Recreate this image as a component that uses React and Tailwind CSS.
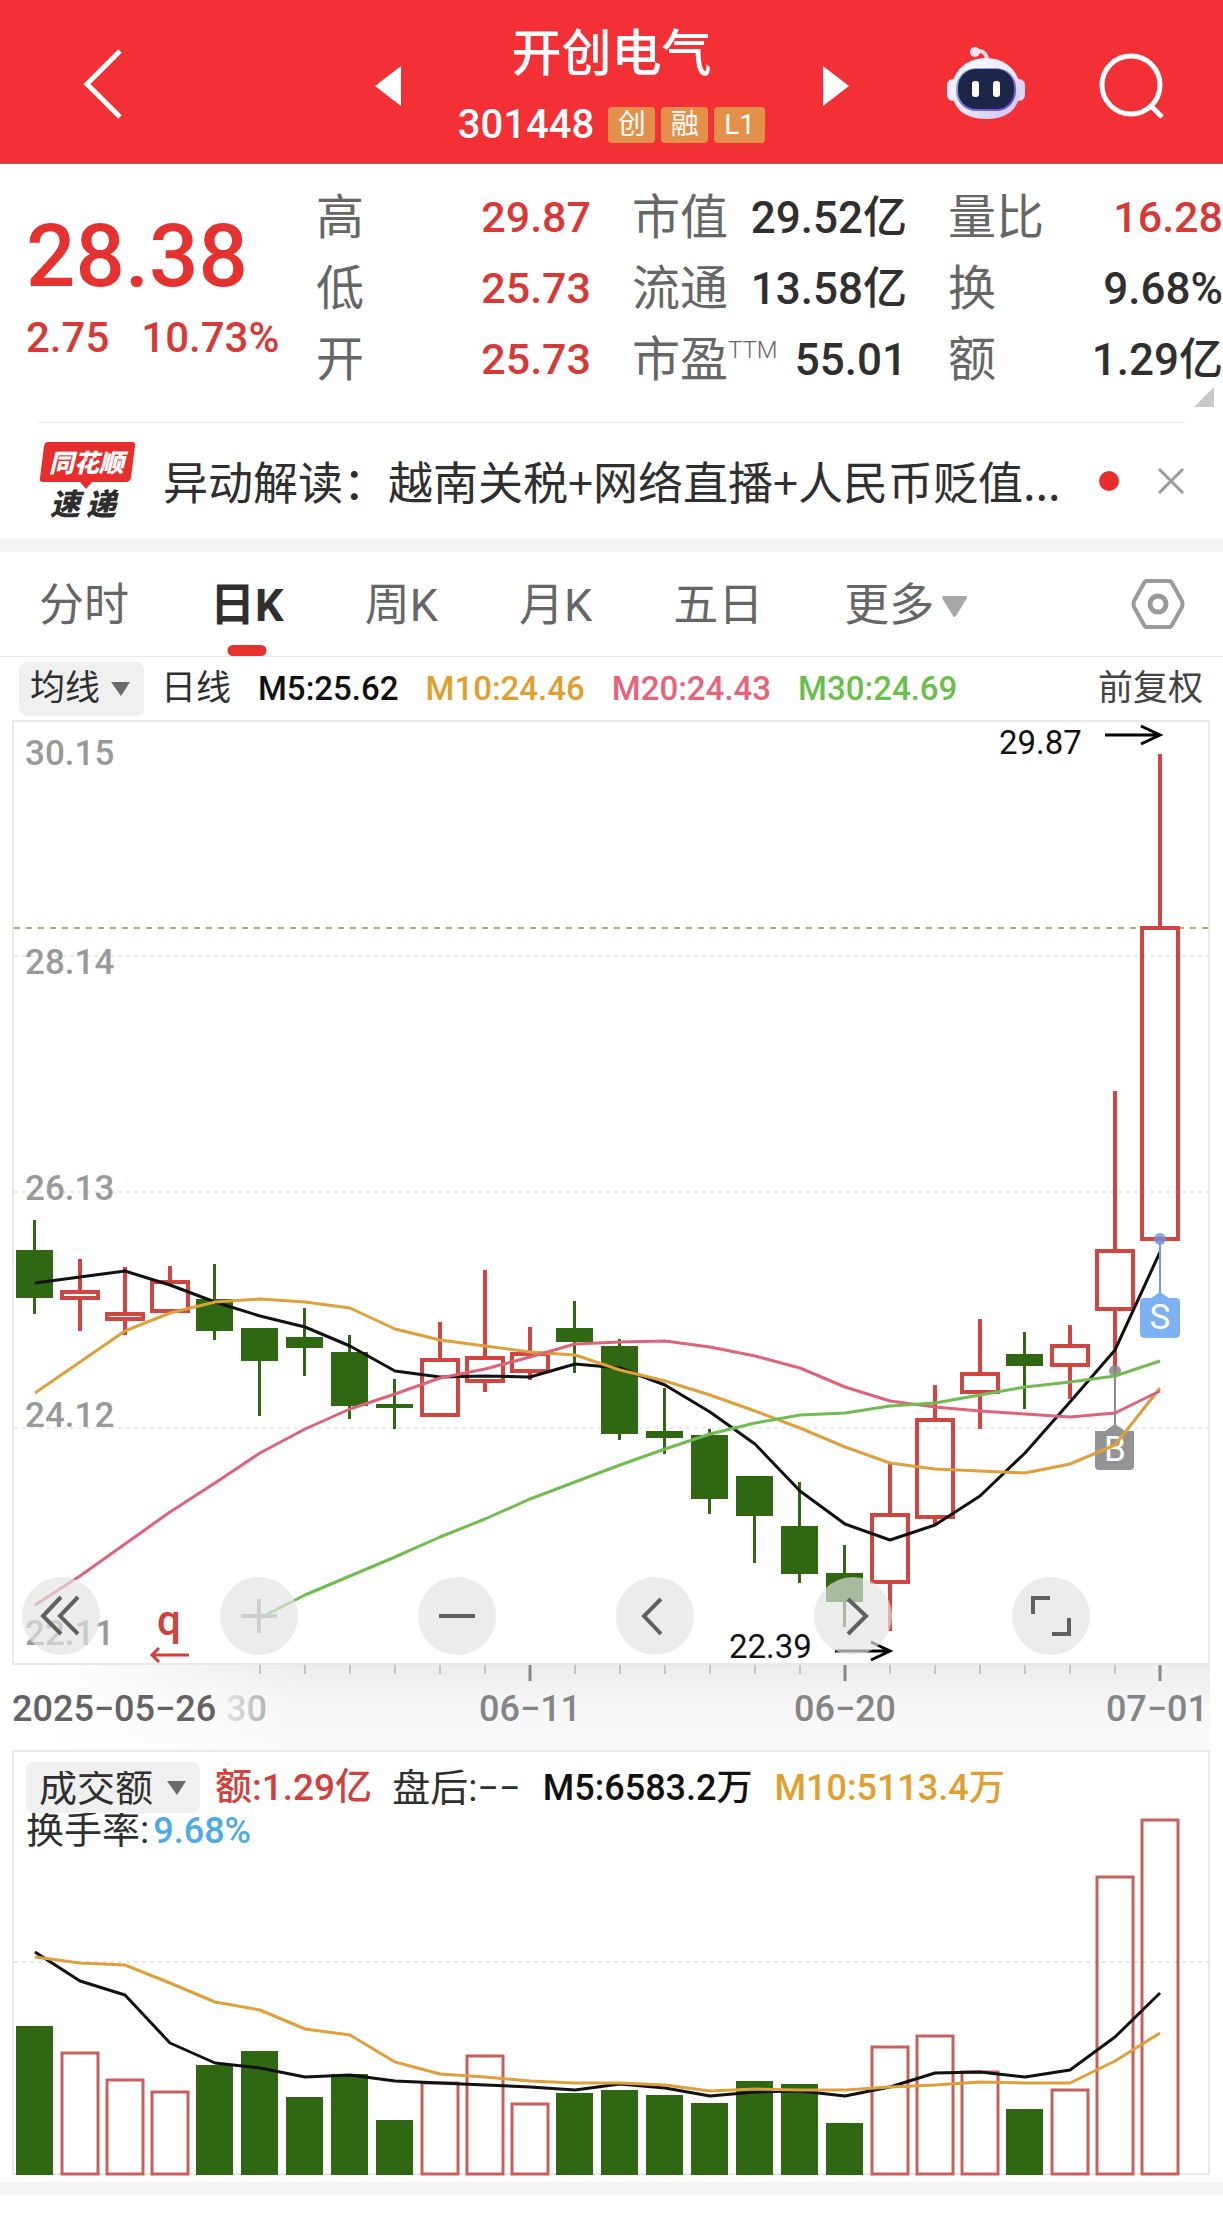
import React from "react";

const GREEN = "#306712";
const RED = "#d0453f";

// [kind, high, body top, body bottom, low]
const CANDLES = [
  ["d", 1220, 1250, 1298, 1314],
  ["u", 1259, 1290, 1300, 1331],
  ["u", 1267, 1312, 1321, 1335],
  ["u", 1266, 1280, 1313, 1313],
  ["d", 1264, 1299, 1331, 1340],
  ["d", 1328, 1328, 1361, 1416],
  ["d", 1308, 1337, 1348, 1376],
  ["d", 1335, 1352, 1406, 1419],
  ["d", 1379, 1404, 1408, 1429],
  ["u", 1322, 1358, 1417, 1417],
  ["u", 1270, 1356, 1383, 1392],
  ["u", 1327, 1352, 1373, 1380],
  ["d", 1301, 1328, 1342, 1373],
  ["d", 1339, 1346, 1434, 1440],
  ["d", 1388, 1431, 1438, 1454],
  ["d", 1429, 1435, 1499, 1514],
  ["d", 1476, 1476, 1516, 1563],
  ["d", 1482, 1526, 1574, 1583],
  ["d", 1545, 1573, 1602, 1627],
  ["u", 1462, 1513, 1584, 1631],
  ["u", 1385, 1418, 1519, 1524],
  ["u", 1319, 1372, 1394, 1429],
  ["d", 1332, 1354, 1366, 1409],
  ["u", 1325, 1344, 1367, 1399],
  ["u", 1091, 1249, 1311, 1372],
  ["u", 754, 926, 1241, 1241],
];

const M5 = [1283, 1277, 1271, 1285, 1302, 1316, 1327, 1346, 1371, 1377, 1376, 1377, 1364, 1368, 1385, 1412, 1444, 1491, 1524, 1540, 1525, 1496, 1453, 1402, 1350, 1252];
const M10 = [1393, 1362, 1331, 1313, 1302, 1299, 1302, 1308, 1329, 1340, 1346, 1352, 1355, 1370, 1381, 1395, 1411, 1428, 1447, 1463, 1469, 1471, 1473, 1464, 1445, 1388];
const M20 = [1605, 1576, 1544, 1512, 1483, 1453, 1429, 1409, 1394, 1378, 1369, 1357, 1344, 1342, 1341, 1347, 1356, 1368, 1387, 1401, 1407, 1411, 1414, 1417, 1413, 1391];
const M30 = [1618, 1595, 1576, 1557, 1537, 1519, 1499, 1482, 1465, 1449, 1434, 1423, 1415, 1413, 1406, 1403, 1395, 1387, 1382, 1376, 1361];

const VOLUME_TOP = [2026, 2052, 2079, 2091, 2065, 2051, 2097, 2074, 2120, 2082, 2055, 2103, 2093, 2090, 2095, 2103, 2081, 2084, 2123, 2046, 2035, 2071, 2109, 2089, 1876, 1819];
const V5 = [1952, 1981, 1995, 2043, 2063, 2068, 2077, 2075, 2081, 2083, 2085, 2087, 2090, 2084, 2088, 2096, 2092, 2091, 2096, 2087, 2073, 2072, 2077, 2070, 2037, 1993];
const V10 = [1957, 1963, 1965, 1983, 2002, 2010, 2029, 2035, 2062, 2074, 2077, 2081, 2083, 2083, 2085, 2091, 2089, 2090, 2090, 2087, 2085, 2082, 2083, 2083, 2061, 2033];

const xAt = (i) => 35 + 45 * i;

function Line({ data, start = 0, color, width = 3 }) {
  const points = data.map((y, i) => `${xAt(i + start)},${y}`).join(" ");
  return <polyline points={points} fill="none" stroke={color} strokeWidth={width} strokeLinejoin="round" />;
}

function Candle({ item, i }) {
  const [kind, high, top, bottom, low] = item;
  const x = xAt(i);
  if (kind === "d") {
    return (
      <g fill={GREEN}>
        <rect x={x - 2} y={high} width="3" height={low - high} />
        <rect x={x - 19} y={top} width="37" height={bottom - top} />
      </g>
    );
  }
  return (
    <g stroke={RED} fill="none">
      <path d={`M${x} ${high}V${top}M${x} ${bottom}V${low}`} strokeWidth="4" />
      <rect x={x - 18} y={top + 2} width="36" height={bottom - top - 4} strokeWidth="4" />
    </g>
  );
}

function Header() {
  return (
    <header className="grid grid-cols-[1fr_auto_1fr] items-center border-b border-[#b8605c] bg-[#f23036] pt-[24px] pb-[20px] text-white">
      <div className="pl-[80px]">
        <button type="button" aria-label="返回" className="block">
          <svg width="46" height="72" viewBox="0 0 46 72" fill="none" stroke="#fff" strokeWidth="5">
            <path d="M40 3L7 36L40 69" />
          </svg>
        </button>
      </div>
      <div className="flex items-center">
        <button type="button" aria-label="上一只" className="mt-1">
          <svg width="26" height="40" viewBox="0 0 26 40" fill="#fff"><path d="M26 0V40L0 20Z" /></svg>
        </button>
        <div className="flex w-[422px] flex-col items-center gap-[23px]">
          <h1 className="text-[50px] leading-[60px] font-medium">开创电气</h1>
          <div className="flex h-9 items-center gap-[6px]">
            <span className="mr-2 text-[40px] leading-9 font-medium">301448</span>
            <span className="w-[47px] rounded bg-[#e3914a] text-center text-[28px] leading-9">创</span>
            <span className="w-[47px] rounded bg-[#e3914a] text-center text-[28px] leading-9">融</span>
            <span className="w-[51px] rounded bg-[#e3914a] text-center text-[28px] leading-9">L1</span>
          </div>
        </div>
        <button type="button" aria-label="下一只" className="mt-1">
          <svg width="26" height="40" viewBox="0 0 26 40" fill="#fff"><path d="M0 0V40L26 20Z" /></svg>
        </button>
      </div>
      <div className="flex items-center justify-end gap-[73px] pr-[58px]">
        <button type="button" aria-label="智能助手">
          <svg width="80" height="76" viewBox="0 0 80 76">
            <defs>
              <linearGradient id="shell" x1="0" y1="0" x2="1" y2="1">
                <stop offset="0" stopColor="#ffffff" />
                <stop offset="0.55" stopColor="#ece6fb" />
                <stop offset="1" stopColor="#c3bdf3" />
              </linearGradient>
              <linearGradient id="rim" x1="0" y1="0" x2="1" y2="1">
                <stop offset="0" stopColor="#8fc4ee" />
                <stop offset="1" stopColor="#6a35d8" />
              </linearGradient>
            </defs>
            <path d="M28 5Q41 3 41 15" fill="none" stroke="#f6d9e6" strokeWidth="4" />
            <circle cx="29" cy="6" r="5" fill="#fbe3ec" />
            <rect x="1" y="33" width="12" height="22" rx="6" fill="#f1eefc" />
            <rect x="67" y="33" width="12" height="22" rx="6" fill="#dcd6f7" />
            <path d="M40 12C60 12 74 26 74 43C74 62 62 73 40 73C18 73 6 62 6 43C6 26 20 12 40 12Z" fill="url(#shell)" />
            <rect x="10" y="22" width="60" height="43" rx="20" fill="url(#rim)" />
            <rect x="12" y="23" width="56" height="40" rx="18" fill="#1d2549" />
            <rect x="26" y="35" width="7" height="16" rx="3" fill="#fff" />
            <rect x="47" y="35" width="7" height="16" rx="3" fill="#fff" />
          </svg>
        </button>
        <button type="button" aria-label="搜索" className="mt-1">
          <svg width="66" height="68" viewBox="0 0 66 68" fill="none" stroke="#fff" strokeWidth="5">
            <circle cx="32" cy="33" r="29" />
            <path d="M52 54L63 65" />
          </svg>
        </button>
      </div>
    </header>
  );
}

function Stat({ label, sup, value, up }) {
  return (
    <div className="flex h-[71px] items-center justify-between whitespace-nowrap">
      <dt className="flex text-[48px] leading-[56px] text-[#666]">
        {label}
        {sup && <sup className="top-0 text-[24px] leading-[36px] font-light">{sup}</sup>}
      </dt>
      <dd className={up ? "text-[43px] font-medium text-[#d63a38]" : "text-[44px] font-medium text-[#2f2f2f]"}>{value}</dd>
    </div>
  );
}

function Quote() {
  return (
    <section className="relative grid grid-cols-[249px_1fr_1fr_1fr] gap-x-[41px] pt-[18px] pb-[27px] pl-[26px]">
      <div className="flex flex-col gap-[9px] pt-[26px] whitespace-nowrap text-[#d63a38]">
        <strong className="text-[87px] leading-[96px] font-medium text-[#e33230]">28.38</strong>
        <p className="flex gap-[32px] text-[42px] leading-[50px] font-medium">
          <span>2.75</span>
          <span>10.73%</span>
        </p>
      </div>
      <dl>
        <Stat label="高" value="29.87" up />
        <Stat label="低" value="25.73" up />
        <Stat label="开" value="25.73" up />
      </dl>
      <dl>
        <Stat label="市值" value="29.52亿" />
        <Stat label="流通" value="13.58亿" />
        <Stat label="市盈" sup="TTM" value="55.01" />
      </dl>
      <dl>
        <Stat label="量比" value="16.28" up />
        <Stat label="换" value="9.68%" />
        <Stat label="额" value="1.29亿" />
      </dl>
      <svg className="absolute right-[9px] bottom-[15px]" width="20" height="20" viewBox="0 0 20 20" fill="#c8c8c8">
        <path d="M20 0V20H0Z" />
      </svg>
    </section>
  );
}

function News() {
  return (
    <section className="mx-[38px] flex h-[117px] items-center border-t border-[#eaeaea]">
      <svg width="98" height="88" viewBox="0 -4 98 88" className="shrink-0" role="img" aria-label="同花顺速递">
        <path d="M10 1H94Q98 1 97 5L93 37Q92 41 88 41H54L48 48L42 41H5Q1 41 2 37L6 5Q7 1 10 1Z" fill="#e62e2d" />
        <text x="11" y="31" fontSize="25" fontWeight="900" fontStyle="italic" fill="#fff">同花顺</text>
        <text x="12" y="74" fontSize="30" fontWeight="900" fontStyle="italic" fill="#2e2e2e">速</text>
        <text x="48" y="74" fontSize="30" fontWeight="900" fontStyle="italic" fill="#2e2e2e">递</text>
      </svg>
      <a href="#news" className="ml-[27px] flex-1 font-['Noto_Sans_CJK_SC',sans-serif] text-[45px] leading-[60px] whitespace-nowrap text-[#2f2f2f]">
        异动解读：越南关税+网络直播+人民币贬值...
      </a>
      <span className="mr-[38px] size-5 rounded-full bg-[#e62e2d]" />
      <button type="button" aria-label="关闭">
        <svg width="28" height="28" viewBox="0 0 28 28" stroke="#999" strokeWidth="3" className="block">
          <path d="M2 2L26 26M26 2L2 26" />
        </svg>
      </button>
    </section>
  );
}

function Tabs() {
  const tab = "pt-1 text-[45px] leading-[60px] text-[#666]";
  return (
    <nav className="flex h-[105px] items-center gap-[81px] border-b border-[#e8e8e8] pr-[38px] pl-[39px] whitespace-nowrap">
      <button type="button" className={tab}>分时</button>
      <button type="button" className="relative pt-1 text-[45px] leading-[60px] font-bold text-[#2f2f2f]">
        日K
        <span className="absolute -bottom-5 left-1/2 h-[11px] w-[39px] -translate-x-1/2 rounded-full bg-[#e33230]" />
      </button>
      <button type="button" className={tab}>周K</button>
      <button type="button" className={tab}>月K</button>
      <button type="button" className={tab}>五日</button>
      <button type="button" className="flex items-center gap-2 pt-1 text-[45px] leading-[60px] text-[#666]">
        更多
        <svg width="25" height="21" viewBox="0 0 25 21" fill="#a8a8a8"><path d="M1 0H24Q25 0 25 2L14 20Q12 22 11 20L0 2Q0 0 1 0Z" /></svg>
      </button>
      <button type="button" aria-label="设置" className="ml-auto">
        <svg width="54" height="52" viewBox="0 0 54 52" fill="none" stroke="#9a9a9a" className="block">
          <path d="M16 3H38Q40 3 41 5L51 23Q52 26 51 29L41 47Q40 49 38 49H16Q14 49 13 47L3 29Q2 26 3 23L13 5Q14 3 16 3Z" strokeWidth="4" />
          <circle cx="27" cy="26" r="8" strokeWidth="5" />
        </svg>
      </button>
    </nav>
  );
}

function Picker({ label, text, className }) {
  return (
    <label className="relative block shrink-0">
      <select aria-label={label} className={className}>
        <option>{text}</option>
      </select>
      <svg className="pointer-events-none absolute top-1/2 right-[14px] -translate-y-1/2" width="19" height="14" viewBox="0 0 19 14" fill="#6b6b6b">
        <path d="M0 0H19L10 14Z" />
      </svg>
    </label>
  );
}

function Averages() {
  return (
    <div className="flex h-[63px] items-center pr-[20px] pl-[19px] text-[33px] leading-[40px] font-medium whitespace-nowrap">
      <Picker
        label="主图指标"
        text="均线"
        className="block h-[54px] w-[125px] appearance-none rounded-lg bg-[#f0f0f0] pl-[11px] text-[35px] font-normal text-[#2f2f2f]"
      />
      <span className="ml-[17px] text-[35px] font-normal text-[#2f2f2f]">日线</span>
      <span className="ml-[27px] text-[#111]">M5:25.62</span>
      <span className="ml-[27px] text-[#e0a030]">M10:24.46</span>
      <span className="ml-[27px] text-[#e8627a]">M20:24.43</span>
      <span className="ml-[27px] text-[#6abf4b]">M30:24.69</span>
      <span className="ml-auto text-[35px] font-normal text-[#444]">前复权</span>
    </div>
  );
}

function RoundButton({ label, children }) {
  return (
    <button type="button" aria-label={label} className="size-[78px] rounded-full bg-[#e3e3e3]/68">
      <svg width="78" height="78" viewBox="0 0 78 78" fill="none" stroke="#606060" strokeWidth="4" className="block">
        {children}
      </svg>
    </button>
  );
}

function PriceChart() {
  const grid = [956, 1192, 1428];
  const major = [11, 18, 25];
  return (
    <section className="relative">
      <svg viewBox="0 720 1223 1030" className="block h-auto w-full" role="img" aria-label="日K线图">
        <defs>
          <linearGradient id="strip" x1="0" y1="0" x2="0" y2="1">
            <stop offset="0" stopColor="#ececec" />
            <stop offset="0.5" stopColor="#f7f7f7" />
            <stop offset="1" stopColor="#fafafa" />
          </linearGradient>
          <linearGradient id="fade" x1="0" y1="0" x2="1" y2="0">
            <stop offset="0" stopColor="#fff" />
            <stop offset="0.2" stopColor="#fff" stopOpacity="0.9" />
            <stop offset="1" stopColor="#fff" stopOpacity="0" />
          </linearGradient>
          <linearGradient id="thirty" x1="0" y1="0" x2="1" y2="0">
            <stop offset="0" stopColor="#e4e4e4" />
            <stop offset="1" stopColor="#b4b4b4" />
          </linearGradient>
        </defs>
        <rect x="13" y="1664" width="1197" height="88" fill="url(#strip)" />
        <rect x="12" y="1664" width="290" height="88" fill="url(#fade)" />
        <rect x="13" y="721" width="1196" height="943" fill="none" stroke="#e9e9e9" strokeWidth="2" />
        {grid.map((y) => (
          <path key={y} d={`M14 ${y}H1209`} stroke="#e6e6e6" strokeWidth="1.5" strokeDasharray="4 4" />
        ))}
        <path d="M14 928H1209" stroke="#c0a878" strokeWidth="2" strokeDasharray="6 6" />

        <g fontSize="35" fontWeight="500" fill="#999">
          <text x="25" y="765">30.15</text>
          <text x="25" y="974">28.14</text>
          <text x="25" y="1200">26.13</text>
          <text x="25" y="1427">24.12</text>
          <text x="25" y="1645">22.11</text>
        </g>

        {CANDLES.map((item, i) => <Candle key={i} item={item} i={i} />)}

        <g>
          <circle cx="1115" cy="1371" r="6" fill="#8a8a8a" fillOpacity="0.85" />
          <path d="M1115 1371V1426" stroke="#8a8a8a" strokeWidth="2" />
          <path d="M1115 1424L1125 1431H1134V1466Q1134 1470 1130 1470H1099Q1095 1470 1095 1466V1431H1105Z" fill="#939393" />
          <text x="1115" y="1461" fontSize="35" textAnchor="middle" fill="#fff">B</text>
        </g>

        <Line data={M5} color="#111" />
        <Line data={M10} color="#dca03c" />
        <Line data={M20} color="#dd6478" />
        <Line data={M30} start={5} color="#72ba54" />

        <g>
          <circle cx="1160" cy="1239" r="6" fill="#6f8fd8" fillOpacity="0.8" />
          <path d="M1160 1240V1294" stroke="#6f9fe0" strokeWidth="2" />
          <path d="M1160 1292L1169 1298H1176Q1180 1298 1180 1302V1333Q1180 1338 1175 1338H1145Q1140 1338 1140 1333V1302Q1140 1298 1144 1298H1151Z" fill="#7db1f2" />
          <text x="1160" y="1329" fontSize="35" textAnchor="middle" fill="#fff">S</text>
        </g>

        <g fontSize="33" fill="#111">
          <text x="999" y="754">29.87</text>
          <text x="729" y="1658">22.39</text>
        </g>
        <g fill="none" stroke="#000" strokeWidth="3">
          <path d="M1105 735H1160M1141 726L1160 735L1141 744" />
          <path d="M835 1651H890M871 1642L890 1651L871 1660" />
        </g>

        <text x="157" y="1635" fontSize="42" fontWeight="500" fill="#d0403c">q</text>
        <path d="M189 1655H152M159 1648L152 1655L159 1662" fill="none" stroke="#d0403c" strokeWidth="3" />

        {CANDLES.map((_, i) =>
          i < 5 ? null : (
            <path
              key={i}
              d={`M${xAt(i)} 1665V${major.includes(i) ? 1681 : 1674}`}
              stroke={major.includes(i) ? "#888" : "#c4c4c4"}
              strokeWidth={major.includes(i) ? 3 : 2}
            />
          ),
        )}
        <g fontSize="36" fontWeight="500">
          <text x="12" y="1721" fill="#636363">2025−05−26</text>
          <text x="226" y="1721" fill="url(#thirty)">30</text>
          <g fill="#858585">
            <text x="530" y="1721" textAnchor="middle">06−11</text>
            <text x="845" y="1721" textAnchor="middle">06−20</text>
            <text x="1208" y="1721" textAnchor="end">07−01</text>
          </g>
        </g>
      </svg>
      <div className="absolute bottom-[95px] left-[22px] flex gap-[120px]">
        <RoundButton label="最早"><path d="M39 20L21 39L39 57M56 20L38 39L56 57" /></RoundButton>
        <RoundButton label="放大"><path d="M39 22V56M21 39H57" stroke="#cfcfcf" /></RoundButton>
        <RoundButton label="缩小"><path d="M21 39H57" /></RoundButton>
        <RoundButton label="左移"><path d="M45 22L28 39L45 57" /></RoundButton>
        <RoundButton label="右移"><path d="M34 22L52 39L34 57" /></RoundButton>
        <RoundButton label="全屏"><path d="M21 37V21H38M57 41V57H40" /></RoundButton>
      </div>
    </section>
  );
}

function VolumeChart() {
  return (
    <section className="relative">
      <svg viewBox="0 1750 1223 432" className="block h-auto w-full" role="img" aria-label="成交额柱状图">
        <rect x="13" y="1751" width="1196" height="423" fill="none" stroke="#e9e9e9" strokeWidth="2" />
        <path d="M14 1962H1209" stroke="#e6e6e6" strokeWidth="2" strokeDasharray="4 4" />
        {VOLUME_TOP.map((y, i) =>
          CANDLES[i][0] === "d" ? (
            <rect key={i} x={xAt(i) - 19} y={y} width="37" height={2175 - y} fill={GREEN} />
          ) : (
            <rect key={i} x={xAt(i) - 18} y={y + 1} width="36" height={2173 - y} fill="none" stroke="#c6605c" strokeWidth="3" />
          ),
        )}
        <Line data={V5} color="#111" />
        <Line data={V10} color="#dca03c" />
      </svg>
      <div className="absolute top-3 left-[26px] text-[36px] leading-[34px] font-medium whitespace-nowrap">
        <div className="flex items-center">
          <Picker
            label="副图指标"
            text="成交额"
            className="block h-[51px] w-[174px] appearance-none rounded-lg bg-[#f0f0f0] pl-[13px] text-[38px] font-normal text-[#2f2f2f]"
          />
          <span className="ml-[15px] text-[37px] text-[#d0403c]">额:1.29亿</span>
          <span className="ml-[20px] text-[38px] font-normal text-[#2f2f2f]">盘后:−−</span>
          <span className="ml-[22px] text-[#111]">M5:6583.2万</span>
          <span className="ml-[22px] text-[#e0a030]">M10:5113.4万</span>
        </div>
        <p className="text-[#4fa9e2]">
          <span className="mr-1 text-[38px] font-normal text-[#2f2f2f]">换手率:</span>9.68%
        </p>
      </div>
    </section>
  );
}

export default function App() {
  return (
    <main className="min-h-screen bg-white font-[Roboto,'Noto_Sans_CJK_SC',sans-serif]">
      <Header />
      <Quote />
      <News />
      <div className="h-[13px] bg-[#f4f4f4]" />
      <Tabs />
      <Averages />
      <PriceChart />
      <VolumeChart />
      <div className="h-[13px] bg-[#f4f4f4]" />
    </main>
  );
}
